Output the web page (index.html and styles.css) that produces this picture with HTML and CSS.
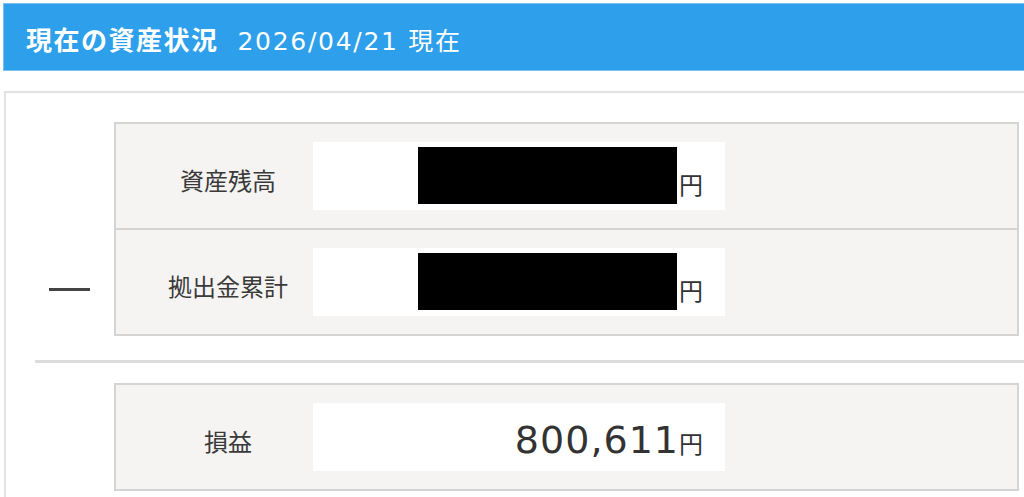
FILE: index.html
```html
<!DOCTYPE html>
<html lang="ja">
<head>
<meta charset="utf-8">
<title>現在の資産状況</title>
<link rel="stylesheet" href="styles.css">
</head>
<body>
<header class="title-bar">
  <span class="title">現在の資産状況</span>
  <span class="date">2026/04/21 現在</span>
</header>
<section class="panel">
  <div class="calc">
    <div class="op"><span class="minus"></span></div>
    <div class="box">
      <div class="row">
        <div class="label">資産残高</div>
        <div class="value"><span class="mask"></span><span class="yen">円</span></div>
      </div>
      <div class="row">
        <div class="label">拠出金累計</div>
        <div class="value"><span class="mask"></span><span class="yen">円</span></div>
      </div>
    </div>
  </div>
  <hr class="sep">
  <div class="calc">
    <div class="op"></div>
    <div class="box">
      <div class="row">
        <div class="label">損益</div>
        <div class="value total"><span class="num">800,611</span><span class="yen">円</span></div>
      </div>
    </div>
  </div>
</section>
</body>
</html>
```
FILE: styles.css
```css
html, body {
  margin: 0;
  padding: 0;
  background: #ffffff;
  overflow: hidden;
}
body {
  font-family: "Noto Sans CJK JP", sans-serif;
  color: #333333;
}
.title-bar {
  margin: 3px 0 0 3px;
  height: 68px;
  box-sizing: border-box;
  background: #2e9fea;
  border: 1px solid #7cc2f1;
  border-right: none;
  display: flex;
  align-items: center;
  padding: 3px 0 0 22px;
  color: #ffffff;
}
.title {
  font-weight: 700;
  font-size: 26px;
  letter-spacing: 1.5px;
  margin-right: 19px;
}
.date {
  font-family: "DejaVu Sans", "Noto Sans CJK JP", sans-serif;
  font-size: 25px;
  letter-spacing: 1.7px;
}
.panel {
  margin: 20px 0 0 4px;
  width: 1040px;
  box-sizing: border-box;
  border: 2px solid #e2e2e2;
  padding: 29px 23px 20px 0;
}
.calc {
  display: flex;
}
.op {
  width: 108px;
  flex: none;
  display: flex;
  align-items: flex-end;
  padding-bottom: 45px;
  box-sizing: border-box;
}
.minus {
  margin-left: 43px;
  width: 41px;
  height: 3px;
  background: #444444;
}
.box {
  flex: 1;
  border: 2px solid #d4d4d4;
  background: #f5f4f2;
}
.row {
  display: flex;
  height: 68px;
  padding: 18px 0;
}
.row + .row {
  border-top: 2px solid #d4d4d4;
}
.label {
  width: 197px;
  flex: none;
  box-sizing: border-box;
  padding: 6px 0 0 27px;
  display: flex;
  align-items: center;
  justify-content: center;
  font-size: 24px;
  color: #3a3a3a;
}
.value {
  width: 412px;
  height: 68px;
  flex: none;
  box-sizing: border-box;
  background: #ffffff;
  text-align: right;
  padding: 5px 22px 0 0;
  font-size: 24px;
  line-height: 1;
  white-space: nowrap;
}
.mask {
  display: inline-block;
  width: 259px;
  height: 57px;
  background: #000000;
  vertical-align: -10px;
  margin-right: 2px;
}
.yen {
  font-family: "Noto Sans CJK JP", sans-serif;
  font-size: 24px;
  line-height: 1;
  letter-spacing: 0;
  color: #333333;
}
.value.total {
  padding-top: 18px;
  font-family: "DejaVu Sans", sans-serif;
  font-size: 38px;
  line-height: 38px;
}
.num {
  color: #333333;
  letter-spacing: 1px;
}
.sep {
  border: none;
  height: 3px;
  background: #dcdcdc;
  margin: 24px -23px 20px 29px;
}
```
